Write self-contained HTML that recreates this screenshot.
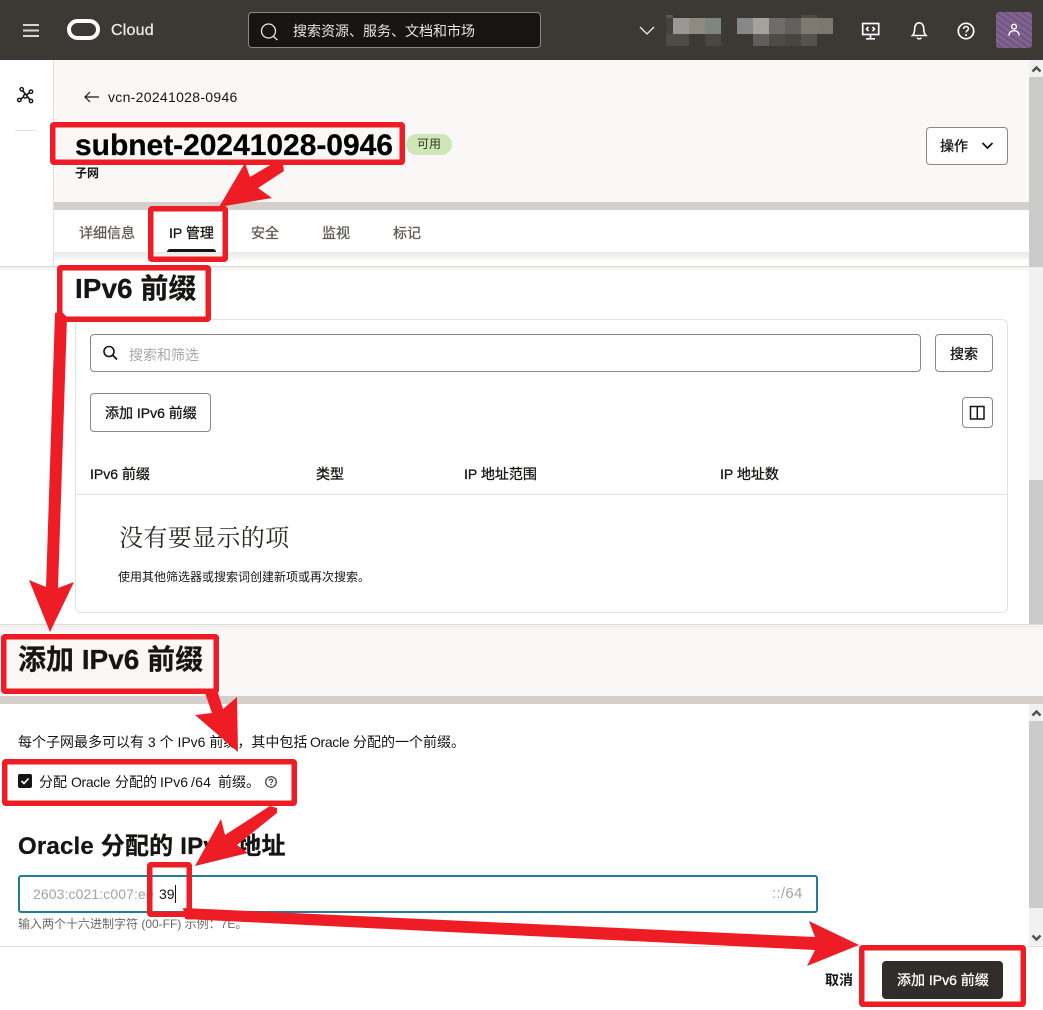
<!DOCTYPE html>
<html lang="zh"><head><meta charset="utf-8"><title>IPv6</title>
<style>
html,body{margin:0;padding:0;width:1043px;height:1010px;overflow:hidden;background:#fff}
body{position:relative;font-family:"Liberation Sans","Noto Sans CJK SC",sans-serif;color:#161513;font-size:14px}
.a{position:absolute;white-space:nowrap}
.t{position:absolute;white-space:nowrap;line-height:20px;height:20px}
.b{font-weight:700}
.m{-webkit-text-stroke:.3px currentColor}
.h{font-weight:700;-webkit-text-stroke:.25px currentColor}
.btn{position:absolute;box-sizing:border-box;border:1px solid #8a8784;border-radius:4px;background:#fff}
svg{position:absolute;left:0;top:0;overflow:visible}
</style></head><body>
<div class="a" style="left:0;top:0;width:1043px;height:60px;background:#3c3833"></div>
<div class="a" style="left:248px;top:12px;width:293px;height:36px;box-sizing:border-box;background:#161513;border:1px solid #8b8884;border-radius:4px"></div>
<div class="t" style="left:293px;top:21px;font-size:14px;color:#e8e6e3">搜索资源、服务、文档和市场</div>
<div class="t m" style="left:111px;top:20.500px;font-size:16px;color:#ece9e5;letter-spacing:.2px">Cloud</div>

<!-- pixelated blocks -->
<div class="a" style="left:666px;top:15px;width:7px;height:3px;background:#5a5652"></div>
<div class="a" style="left:666px;top:18px;width:7px;height:16px;background:#45413c"></div>
<div class="a" style="left:666px;top:34px;width:7px;height:12px;background:#4f4b46"></div>
<div class="a" style="left:673px;top:18px;width:16px;height:16px;background:#999894"></div>
<div class="a" style="left:689px;top:18px;width:16px;height:16px;background:#8f8a80"></div>
<div class="a" style="left:705px;top:18px;width:16px;height:16px;background:#7e877f"></div>
<div class="a" style="left:673px;top:34px;width:16px;height:12px;background:#4f4b46"></div>
<div class="a" style="left:705px;top:34px;width:16px;height:12px;background:#4a4641"></div>
<div class="a" style="left:737px;top:18px;width:16px;height:16px;background:#88888a"></div>
<div class="a" style="left:753px;top:18px;width:16px;height:16px;background:#a3a29c"></div>
<div class="a" style="left:769px;top:18px;width:16px;height:16px;background:#6e6d6a"></div>
<div class="a" style="left:785px;top:18px;width:16px;height:16px;background:#62605c"></div>
<div class="a" style="left:801px;top:18px;width:16px;height:16px;background:#7e7a72"></div>
<div class="a" style="left:817px;top:18px;width:16px;height:16px;background:#7c7870"></div>
<div class="a" style="left:753px;top:34px;width:16px;height:12px;background:#5f5e5b"></div>
<div class="a" style="left:769px;top:34px;width:16px;height:12px;background:#4e4b46"></div>
<div class="a" style="left:785px;top:34px;width:16px;height:12px;background:#484540"></div>
<div class="a" style="left:801px;top:34px;width:16px;height:12px;background:#55524c"></div>
<div class="a" style="left:801px;top:15px;width:16px;height:3px;background:#4d4a45"></div>

<!-- avatar -->
<div class="a" style="left:996px;top:12px;width:36px;height:36px;border-radius:3px;background:repeating-linear-gradient(35deg,#80648f 0 3px,#705583 3px 5px)"></div>

<!-- upper page -->
<div class="a" style="left:54px;top:60px;width:975px;height:142px;background:#f9f8f6"></div>
<div class="a" style="left:54px;top:202px;width:975px;height:8px;background:#d4cfca"></div>
<div class="a" style="left:53px;top:60px;width:1px;height:206px;background:#e4e2df"></div>
<div class="a" style="left:15px;top:130px;width:21px;height:1px;background:#e4e2df"></div>
<div class="a" style="left:54px;top:252px;width:975px;height:14px;background:linear-gradient(#e9e8e6,#fff 70%)"></div>
<div class="a" style="left:0;top:266px;width:1029px;height:1px;background:#d9d7d4"></div>
<div class="a" style="left:0;top:267px;width:1029px;height:5px;background:linear-gradient(#f1f0ef,#fff)"></div>

<div class="t" style="left:108px;top:87px;font-size:14px;letter-spacing:.3px">vcn-20241028-0946</div>
<div class="t h" style="left:75px;top:131px;font-size:30px;line-height:30px;height:30px;color:#000;letter-spacing:-.03px">subnet-20241028-0946</div>
<div class="a" style="left:406px;top:134px;width:46px;height:21px;border-radius:11px;background:#cfe6b8"></div>
<div class="t" style="left:417px;top:134px;font-size:12px;color:#33381f">可用</div>
<div class="t b" style="left:75px;top:163px;font-size:12px">子网</div>
<div class="btn" style="left:926px;top:127px;width:82px;height:38px"></div>
<div class="t m" style="left:940px;top:136px;font-size:14px">操作</div>

<div class="t m" style="left:79px;top:223px;color:#5f5b56">详细信息</div>
<div class="t m" style="left:169px;top:223px">IP 管理</div>
<div class="t m" style="left:251px;top:223px;color:#5f5b56">安全</div>
<div class="t m" style="left:322px;top:223px;color:#5f5b56">监视</div>
<div class="t m" style="left:393px;top:223px;color:#5f5b56">标记</div>
<div class="a" style="left:167px;top:249px;width:49px;height:3px;background:#161513;border-radius:3px 3px 0 0"></div>

<div class="t h" style="left:75px;top:275px;font-size:28px;line-height:28px;height:28px;color:#161513">IPv6 前缀</div>

<div class="a" style="left:75px;top:319px;width:933px;height:294px;box-sizing:border-box;border:1px solid #e4e2df;border-radius:6px"></div>
<div class="btn" style="left:90px;top:334px;width:831px;height:38px"></div>
<div class="t" style="left:129px;top:344.500px;color:#a9a7a4;font-size:14px">搜索和筛选</div>
<div class="btn" style="left:935px;top:334px;width:58px;height:38px"></div>
<div class="t m" style="left:950px;top:344px">搜索</div>
<div class="btn" style="left:90px;top:393px;width:121px;height:39px"></div>
<div class="t m" style="left:105px;top:403px">添加 IPv6 前缀</div>
<div class="btn" style="left:962px;top:397px;width:31px;height:31px"></div>

<div class="t m" style="left:90px;top:464px">IPv6 前缀</div>
<div class="t m" style="left:316px;top:464px">类型</div>
<div class="t m" style="left:464px;top:464px">IP 地址范围</div>
<div class="t m" style="left:720px;top:464px">IP 地址数</div>
<div class="a" style="left:76px;top:494px;width:931px;height:1px;background:#e4e2df"></div>
<div class="t" style="left:119px;top:527px;font-size:24px;line-height:24px;height:24px;letter-spacing:.35px;font-family:'Liberation Serif','Noto Serif CJK SC',serif;color:#2b2926">没有要显示的项</div>
<div class="t" style="left:118px;top:567px;font-size:12px">使用其他筛选器或搜索词创建新项或再次搜索。</div>

<!-- lower page -->
<div class="a" style="left:0;top:624px;width:1043px;height:1px;background:#dddbd8"></div>
<div class="a" style="left:0;top:625px;width:1043px;height:71px;background:linear-gradient(#f1f0ee,#f9f8f6 10%)"></div>
<div class="a" style="left:0;top:696px;width:1043px;height:8px;background:#d4cfca"></div>
<div class="t h" style="left:18px;top:646px;font-size:28px;line-height:28px;height:28px">添加 IPv6 前缀</div>

<div class="t" style="left:18px;top:732px;font-size:14px">每个子网最多可以有 3 个 IPv6 前缀，其中包括</div>
<div class="t" style="left:310px;top:732px;font-size:14px;letter-spacing:-.35px">Oracle</div>
<div class="t" style="left:353px;top:732px;font-size:14px">分配的一个前缀。</div>
<div class="a" style="left:18px;top:774px;width:14px;height:14px;border-radius:2px;background:#161513"></div>
<div class="t" style="left:39px;top:772px;font-size:14px">分配</div>
<div class="t" style="left:71px;top:772px;font-size:14px;letter-spacing:-.35px">Oracle</div>
<div class="t" style="left:115px;top:772px;font-size:14px">分配的</div>
<div class="t" style="left:160px;top:772px;font-size:14px">IPv6</div>
<div class="t" style="left:191px;top:772px;font-size:14px;letter-spacing:.2px">/64</div>
<div class="t" style="left:218px;top:772px;font-size:14px">前缀。</div>
<div class="t h" style="left:18px;top:835px;font-size:24px;line-height:24px;height:24px;letter-spacing:.2px">Oracle 分配的 IPv6 地址</div>
<div class="a" style="left:18px;top:875px;width:800px;height:38px;box-sizing:border-box;border:2px solid #227a9c;border-radius:3px"></div>
<div class="t" style="left:33px;top:884px;font-size:14px;color:#a5a3a0;letter-spacing:.1px">2603:c021:c007:ee</div>
<div class="t" style="left:159px;top:884px;font-size:14px">39</div>
<div class="a" style="left:175px;top:885px;width:1px;height:18px;background:#161513"></div>
<div class="t" style="left:772px;top:884px;font-size:15px;color:#a5a3a0;letter-spacing:.3px">::/64</div>
<div class="t" style="left:18px;top:914px;font-size:12px;color:#6b6864">输入两个十六进制字符 (00-FF) 示例：7E。</div>
<div class="a" style="left:0;top:946px;width:1043px;height:1px;background:#e4e2df"></div>
<div class="t b" style="left:825px;top:970px;font-size:14px">取消</div>
<div class="a" style="left:882px;top:961px;width:121px;height:38px;border-radius:4px;background:#312d2a"></div>
<div class="t m" style="left:897px;top:970px;color:#fff">添加 IPv6 前缀</div>

<!-- scrollbars -->
<div class="a" style="left:1029px;top:60px;width:14px;height:206px;background:#f1f1f1"></div>
<div class="a" style="left:1029px;top:77px;width:14px;height:190px;background:#cbcbcb"></div>
<div class="a" style="left:1029px;top:267px;width:14px;height:213px;background:#f1f1f1"></div>
<div class="a" style="left:1029px;top:480px;width:14px;height:144px;background:#cbcbcb"></div>
<div class="a" style="left:1029px;top:704px;width:14px;height:242px;background:#f1f1f1"></div>
<div class="a" style="left:1029px;top:721px;width:14px;height:187px;background:#cbcbcb"></div>

<svg width="1043" height="1010" viewBox="0 0 1043 1010" fill="none">
  <!-- hamburger -->
  <path d="M23 25H39M23 30.500H39M23 36H39" stroke="#d8d6d3" stroke-width="2"/>
  <!-- oracle logo -->
  <rect x="69" y="21" width="29" height="17" rx="8.500" stroke="#fff" stroke-width="4"/>
  <!-- search -->
  <circle cx="268.500" cy="31" r="7" stroke="#e8e6e3" stroke-width="1.300"/>
  <path d="M273.500 36.500L277.500 40" stroke="#e8e6e3" stroke-width="1.300"/>
  <!-- chevron -->
  <path d="M640 27L647 34L654 27" stroke="#f0eeeb" stroke-width="1.300"/>
  <!-- dev monitor -->
  <rect x="862.700" y="23.500" width="16" height="11" stroke="#fff" stroke-width="1.700"/>
  <path d="M868.500 27L866.500 29L868.500 31M872.500 27L874.500 29L872.500 31" stroke="#fff" stroke-width="1.600"/>
  <path d="M870.500 35V38.500M866 38.800H875" stroke="#fff" stroke-width="1.600"/>
  <!-- bell -->
  <path d="M912.500 35.500C914.500 33.500 914.700 31 914.700 28.500C914.700 25 916.700 22.800 919.200 22.800C921.700 22.800 923.700 25 923.700 28.500C923.700 31 924 33.500 926 35.500Z" stroke="#fff" stroke-width="1.600"/>
  <path d="M917 37.800C918 39.200 920.400 39.200 921.400 37.800" stroke="#fff" stroke-width="1.400"/>
  <!-- help -->
  <circle cx="966" cy="31" r="7.700" stroke="#fff" stroke-width="1.700"/>
  <path d="M963.500 29C963.500 27.500 964.700 26.500 966 26.500C967.500 26.500 968.500 27.500 968.500 28.700C968.500 30.500 966 30.500 966 32.500" stroke="#fff" stroke-width="1.500"/>
  <circle cx="966" cy="35" r="1" fill="#fff"/>
  <!-- avatar person -->
  <circle cx="1014" cy="26.700" r="2.400" stroke="#fff" stroke-width="1.400"/>
  <path d="M1008.800 35.500C1009.300 31.800 1012 30.700 1014 30.700C1016 30.700 1018.700 31.800 1019.200 35.500" stroke="#fff" stroke-width="1.400"/>
  <!-- network icon -->
  <path d="M21.700 89.500L31 101M31 91.700L19.300 100" stroke="#161513" stroke-width="1.600"/>
  <circle cx="21.700" cy="89.300" r="1.700" fill="#fff" stroke="#161513" stroke-width="1.400"/>
  <circle cx="31" cy="91.700" r="1.700" fill="#fff" stroke="#161513" stroke-width="1.400"/>
  <circle cx="19.300" cy="100" r="1.700" fill="#fff" stroke="#161513" stroke-width="1.400"/>
  <circle cx="31" cy="101" r="1.700" fill="#fff" stroke="#161513" stroke-width="1.400"/>
  <circle cx="25.300" cy="96.300" r="1.800" fill="#fff" stroke="#161513" stroke-width="1.400"/>
  <!-- back arrow -->
  <path d="M99 97H85M90 92L85 97L90 102" stroke="#161513" stroke-width="1.200"/>
  <!-- action chevron -->
  <path d="M982.500 143L987.500 148L992.500 143" stroke="#161513" stroke-width="1.800"/>
  <!-- search icon -->
  <circle cx="109" cy="351.500" r="5" stroke="#161513" stroke-width="1.600"/>
  <path d="M112.700 355.200L117 359.500" stroke="#161513" stroke-width="1.800"/>
  <!-- column icon -->
  <path d="M970.500 406.500H984V419H970.500ZM977.300 406.500V419" stroke="#161513" stroke-width="1.500"/>
  <!-- check -->
  <path d="M21.500 781L24 783.500L28.500 778.500" stroke="#fff" stroke-width="1.600"/>
  <!-- help small -->
  <circle cx="271" cy="782" r="5.300" stroke="#3c3833" stroke-width="1.200"/>
  <path d="M269.300 780.800C269.300 779.800 270.100 779.200 271 779.200C272 779.200 272.700 780 272.700 780.700C272.700 781.800 271 781.800 271 783.200" stroke="#3c3833" stroke-width="1.100"/>
  <circle cx="271" cy="784.700" r="0.700" fill="#3c3833"/>
  <!-- scrollbar arrows -->
  <path d="M1032.500 71.500L1036.500 67.500L1040.500 71.500" stroke="#505050" stroke-width="2.400"/>
  <path d="M1032.500 715.500L1036.500 711.500L1040.500 715.500" stroke="#505050" stroke-width="2.400"/>
  <path d="M1032.500 935.500L1036.500 939.500L1040.500 935.500" stroke="#505050" stroke-width="2.400"/>

  <!-- red annotations -->
  <g stroke="#ee1c25" stroke-width="5.500" stroke-linejoin="round">
    <rect x="52.750" y="124.750" width="349.500" height="37.500" rx="1"/>
    <rect x="150.750" y="208.750" width="74.500" height="50.500" rx="1"/>
    <rect x="59.750" y="267.750" width="148.500" height="51.500" rx="1"/>
    <rect x="3.750" y="636.750" width="212.500" height="54.500" rx="1"/>
    <rect x="4.750" y="761.750" width="289.500" height="41.500" rx="1"/>
    <rect x="149.750" y="864.750" width="39.500" height="49.500" rx="1"/>
    <rect x="861.750" y="947.750" width="161.500" height="56.500" rx="1"/>
  </g>
  <g fill="#ee1c25">
    <polygon points="245,163 219,207 272,198 258,188 284,171 283,165 272,164 250,177"/>
    <polygon points="55,313 61,311 67,317 58,588 74,582 50,632 29,580 46,587"/>
    <polygon points="205,693 218,693 223,709 237,697 238,752 195,715 212,713"/>
    <polygon points="270,806 277,808 277,813 237,845 248,853 195,866 221,819 225,835"/>
    <polygon points="183,908 815,937 809,921 859,945 807,966 815,950 185,919"/>
  </g>
</svg>
</body></html>
